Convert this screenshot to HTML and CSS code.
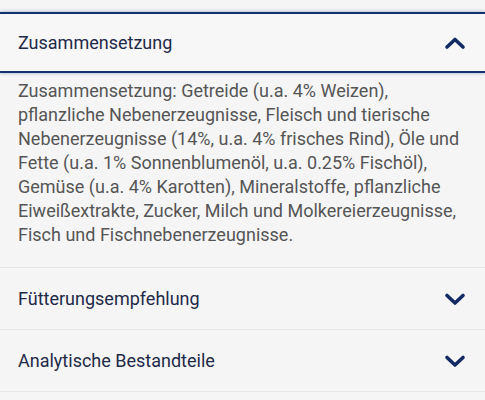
FILE: index.html
```html
<!DOCTYPE html>
<html lang="de">
<head>
<meta charset="utf-8">
<link rel="stylesheet" href="styles.css">
</head>
<body>
<div class="accordion">
  <section class="item open">
    <div class="head">
      <span class="title">Zusammensetzung</span>
      <svg class="chev" width="22" height="14" viewBox="0 0 22 14"><path d="M3 11 L11 3.5 L19 11" fill="none" stroke="#132a63" stroke-width="3.6" stroke-linecap="round" stroke-linejoin="round"/></svg>
    </div>
    <div class="content">Zusammensetzung: Getreide (u.a. 4% Weizen), pflanzliche Nebenerzeugnisse, Fleisch und tierische Nebenerzeugnisse (14%, u.a. 4% frisches Rind), Öle und Fette (u.a. 1% Sonnenblumenöl, u.a. 0.25% Fischöl), Gemüse (u.a. 4% Karotten), Mineralstoffe, pflanzliche Eiweißextrakte, Zucker, Milch und Molkereierzeugnisse, Fisch und Fischnebenerzeugnisse.</div>
  </section>
  <section class="item">
    <div class="head">
      <span class="title">Fütterungsempfehlung</span>
      <svg class="chev" width="22" height="14" viewBox="0 0 22 14"><path d="M3 3.5 L11 11 L19 3.5" fill="none" stroke="#132a63" stroke-width="3.6" stroke-linecap="round" stroke-linejoin="round"/></svg>
    </div>
  </section>
  <section class="item">
    <div class="head">
      <span class="title">Analytische Bestandteile</span>
      <svg class="chev" width="22" height="14" viewBox="0 0 22 14"><path d="M3 3.5 L11 11 L19 3.5" fill="none" stroke="#132a63" stroke-width="3.6" stroke-linecap="round" stroke-linejoin="round"/></svg>
    </div>
  </section>
</div>
</body>
</html>
```
FILE: styles.css
```css
html, body {
  margin: 0;
  padding: 0;
  background: #f5f5f5;
}
body {
  font-family: Roboto, "Noto Sans", sans-serif;
  width: 485px;
  height: 400px;
  overflow: hidden;
}
.accordion {
  padding-top: 12px;
}
.item {
  border-bottom: 1px solid #e6e6e6;
}
.head {
  display: flex;
  align-items: center;
  justify-content: space-between;
  height: 61px;
  padding: 0 19px 0 18px;
  box-sizing: border-box;
}
.title {
  font-size: 18px;
  color: #1e2a48;
}
.chev {
  display: block;
}
.item.open .head {
  height: 61px;
  border-top: 2px solid #15306e;
  border-bottom: 2px solid #15306e;
  box-shadow: 0 -1px 3px rgba(60, 90, 170, 0.25), 0 1px 3px rgba(60, 90, 170, 0.25);
  background: #f7f7f7;
}
.content {
  padding: 6px 10px 20px 18px;
  font-size: 18px;
  line-height: 24px;
  color: #555555;
}
```
